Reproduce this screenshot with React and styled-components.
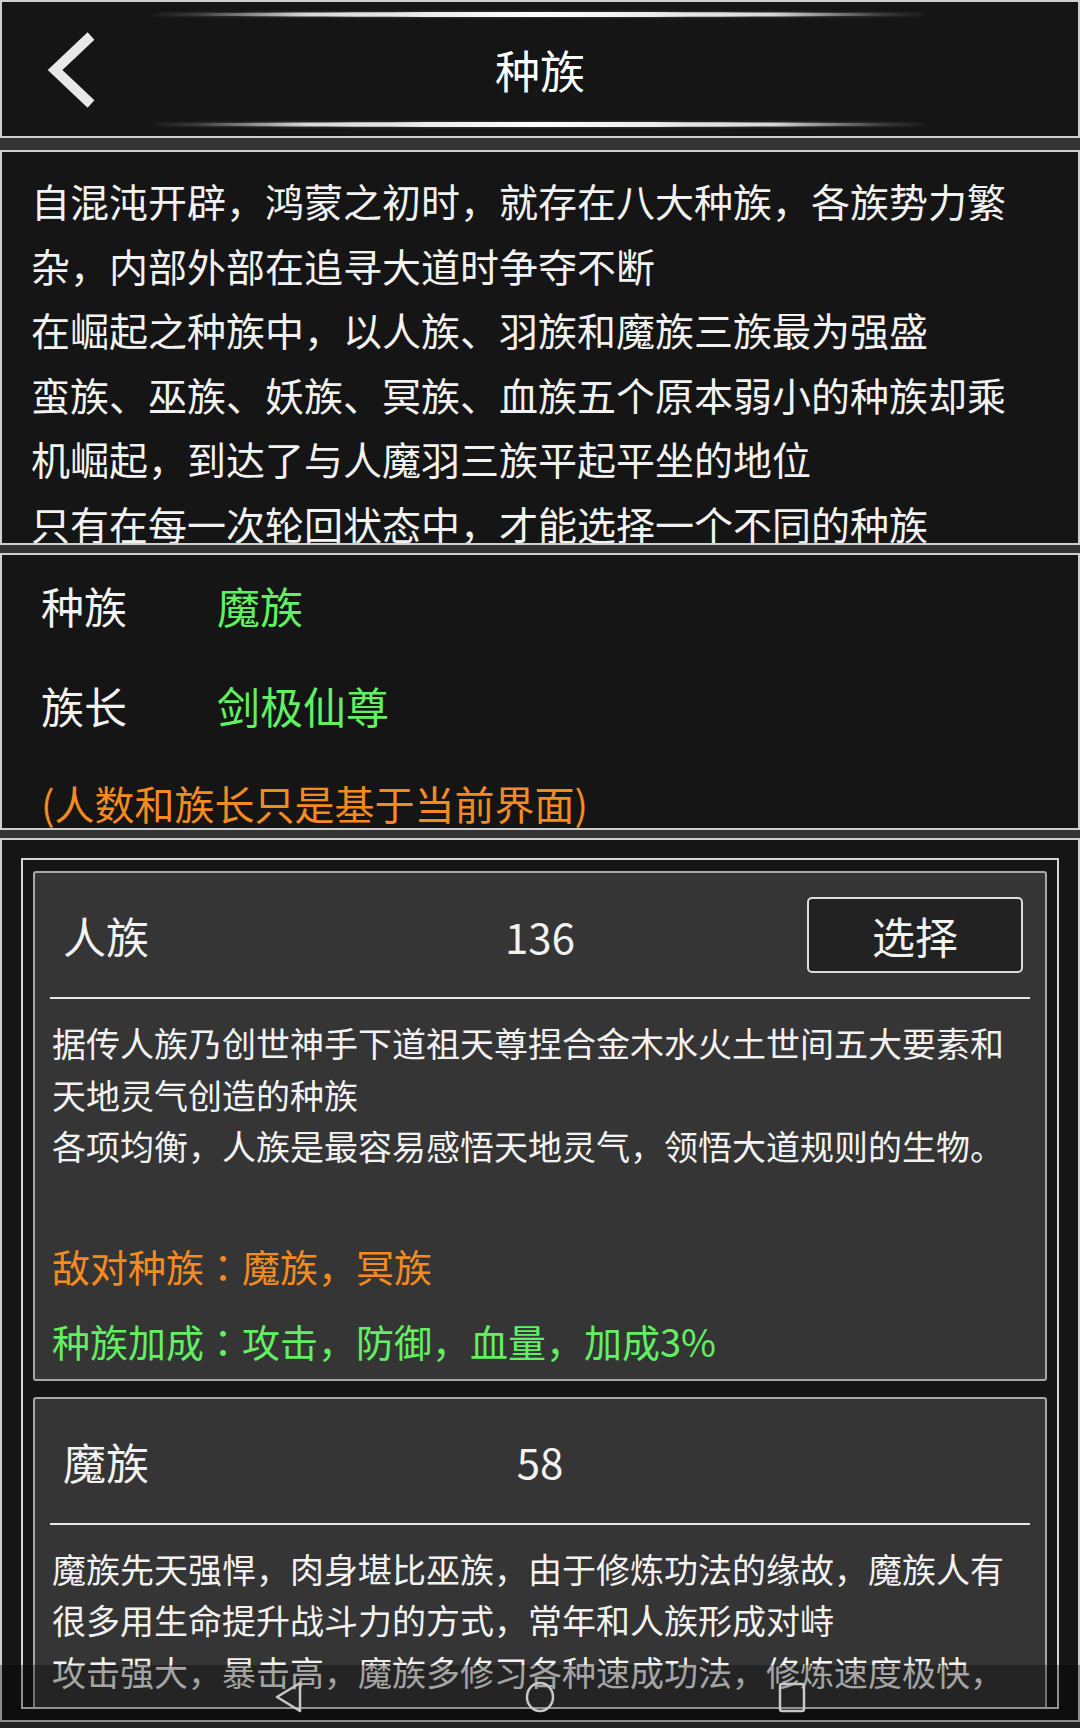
import React from 'react';
import styled, { createGlobalStyle } from 'styled-components';

const GlobalStyle = createGlobalStyle`
    html, body {
        margin: 0;
        padding: 0;
        background: #333333;
    }
`;

const Page = styled.div`
    position: relative;
    width: 1080px;
    height: 1728px;
    overflow: hidden;
    background: #333333;
    display: flex;
    flex-direction: column;
    font-family: "Noto Sans CJK SC", "Noto Sans", sans-serif;
    color: #f2f2f2;
`;

const Panel = styled.section`
    box-sizing: border-box;
    background: #151515;
    border: 2px solid #cfcfcf;
    flex-shrink: 0;
    margin-top: ${p => p.$gap || 0}px;
`;

const Header = styled(Panel)`
    height: 138px;
    display: flex;
    flex-direction: column;
    padding: 10px 0 9px;
`;

const Glow = styled.div`
    height: 5px;
    margin: 0 152px 0 150px;
    border-radius: 50%;
    background: linear-gradient(90deg, rgba(80, 80, 80, 0) 0%, #4a4a4a 7%, #d8d8d8 20%, #ffffff 50%, #d8d8d8 80%, #4a4a4a 93%, rgba(80, 80, 80, 0) 100%);
    box-shadow: 0 0 3px rgba(255, 255, 255, 0.25);
`;

const TitleRow = styled.div`
    flex: 1;
    display: grid;
    grid-template-columns: 1fr auto 1fr;
    align-items: center;
`;

const BackButton = styled.div`
    justify-self: start;
    margin-left: 44px;
    width: 50px;
    height: 78px;
    display: flex;
    svg {
        display: block;
    }
`;

const Title = styled.h1`
    margin: 0;
    font-size: 45px;
    font-weight: 400;
    line-height: 1;
    color: #ffffff;
`;

const Intro = styled(Panel)`
    height: 395px;
    overflow: hidden;
    padding: 16px 50px 0 29px;
    font-size: 39px;
    line-height: 64.5px;
`;

const Line = styled.div``;

const Info = styled(Panel)`
    padding: 0 0 0 39px;
`;

const InfoRow = styled.div`
    display: grid;
    grid-template-columns: 176px 1fr;
    align-items: center;
    height: 100px;
    font-size: 43px;
`;

const Value = styled.span`
    color: ${p => p.$color || '#f2f2f2'};
`;

const Note = styled.div`
    margin-top: 23px;
    font-size: 40px;
    line-height: 50px;
    color: #f58a1f;
`;

const ListPanel = styled(Panel)`
    flex: 1;
    flex-shrink: 1;
    min-height: 0;
    margin-bottom: 6px;
    padding: 18px 19px 11px;
    display: flex;
    flex-direction: column;
`;

const ListBox = styled.div`
    flex: 1;
    min-height: 0;
    overflow: hidden;
    border: 2px solid #d6d6d6;
    padding: 11px 10px 0;
    display: flex;
    flex-direction: column;
    gap: 16px;
`;

const Card = styled.div`
    flex-shrink: 0;
    background: #353535;
    border: 2px solid #a8a8a8;
    border-radius: 3px;
    padding-bottom: 8px;
`;

const CardHead = styled.div`
    height: 124px;
    display: grid;
    grid-template-columns: 1fr auto 1fr;
    align-items: center;
    padding: 0 22px;
`;

const RaceName = styled.span`
    margin-left: 6px;
    font-size: 43px;
`;

const Count = styled.span`
    font-size: 42px;
`;

const SelectButton = styled.button`
    justify-self: end;
    width: 216px;
    height: 76px;
    box-sizing: border-box;
    background: #222222;
    border: 2.5px solid #dddddd;
    border-radius: 5px;
    color: #f2f2f2;
    font-family: inherit;
    font-size: 43px;
    line-height: 1;
    padding: 0;
`;

const Divider = styled.div`
    height: 2px;
    margin: 0 15px;
    background: #e8e8e8;
`;

const Desc = styled.div`
    padding: 18px 17px 0;
    font-size: 34px;
    line-height: 51.5px;
`;

const Trait = styled.div`
    padding: 0 17px;
    margin-top: ${p => p.$gap}px;
    font-size: 38px;
    line-height: 60px;
    color: ${p => p.$color};
`;

/* the game's font centres the full-width colon */
const Colon = styled.span`
    font-family: "Noto Sans CJK JP", "Noto Sans CJK SC", sans-serif;
`;

const NavBar = styled.div`
    position: absolute;
    left: 0;
    right: 0;
    bottom: 0;
    height: 63px;
    background: rgba(0, 0, 0, 0.32);
    display: flex;
    justify-content: center;
    align-items: center;
    gap: 222px;
    svg {
        display: block;
    }
`;

const GREEN = '#62f062';
const ORANGE = '#f58a1f';

const races = [
    {
        name: '人族',
        count: 136,
        selectable: true,
        desc: [
            '据传人族乃创世神手下道祖天尊捏合金木水火土世间五大要素和天地灵气创造的种族',
            '各项均衡，人族是最容易感悟天地灵气，领悟大道规则的生物。',
        ],
        enemy: ['敌对种族', '魔族，冥族'],
        bonus: ['种族加成', '攻击，防御，血量，加成3%'],
    },
    {
        name: '魔族',
        count: 58,
        selectable: false,
        desc: [
            '魔族先天强悍，肉身堪比巫族，由于修炼功法的缘故，魔族人有很多用生命提升战斗力的方式，常年和人族形成对峙',
            '攻击强大，暴击高，魔族多修习各种速成功法，修炼速度极快，但是往往根基不稳',
        ],
        enemy: ['敌对种族', '人族，羽族'],
        bonus: ['种族加成', '攻击，暴击，加成3%'],
    },
];

const intro = [
    '自混沌开辟，鸿蒙之初时，就存在八大种族，各族势力繁杂，内部外部在追寻大道时争夺不断',
    '在崛起之种族中，以人族、羽族和魔族三族最为强盛',
    '蛮族、巫族、妖族、冥族、血族五个原本弱小的种族却乘机崛起，到达了与人魔羽三族平起平坐的地位',
    '只有在每一次轮回状态中，才能选择一个不同的种族',
];

const RaceCard = ({ race }) => (
    <Card>
        <CardHead>
            <RaceName>{race.name}</RaceName>
            <Count>{race.count}</Count>
            {race.selectable ? <SelectButton type="button">选择</SelectButton> : <span />}
        </CardHead>
        <Divider />
        <Desc>
            {race.desc.map(d => <Line key={d}>{d}</Line>)}
        </Desc>
        <Trait $gap={64} $color={ORANGE}>
            {race.enemy[0]}<Colon>：</Colon>{race.enemy[1]}
        </Trait>
        <Trait $gap={15} $color={GREEN}>
            {race.bonus[0]}<Colon>：</Colon>{race.bonus[1]}
        </Trait>
    </Card>
);

export default function App() {
    return (
        <Page>
            <GlobalStyle />
            <Header>
                <Glow />
                <TitleRow>
                    <BackButton>
                        <svg width="50" height="78" viewBox="0 0 50 78">
                            <polyline points="45,5 9,39 45,73" fill="none" stroke="#e8e8e8" strokeWidth="10" strokeLinejoin="miter" />
                        </svg>
                    </BackButton>
                    <Title>种族</Title>
                    <span />
                </TitleRow>
                <Glow />
            </Header>

            <Intro $gap={12}>
                {intro.map(t => <Line key={t}>{t}</Line>)}
            </Intro>

            <Info $gap={8}>
                <InfoRow>
                    <span>种族</span>
                    <Value $color={GREEN}>魔族</Value>
                </InfoRow>
                <InfoRow>
                    <span>族长</span>
                    <Value $color={GREEN}>剑极仙尊</Value>
                </InfoRow>
                <Note>(人数和族长只是基于当前界面)</Note>
            </Info>

            <ListPanel $gap={8}>
                <ListBox>
                    {races.map(r => <RaceCard key={r.name} race={r} />)}
                </ListBox>
            </ListPanel>

            <NavBar>
                <svg width="30" height="32" viewBox="0 0 30 32">
                    <polygon points="27,2 4,16 27,30" fill="none" stroke="#c8c8c8" strokeWidth="2.5" strokeLinejoin="round" />
                </svg>
                <svg width="30" height="32" viewBox="0 0 30 32">
                    <ellipse cx="15" cy="16" rx="13" ry="14" fill="none" stroke="#c8c8c8" strokeWidth="2.5" />
                </svg>
                <svg width="30" height="32" viewBox="0 0 30 32">
                    <rect x="3" y="3" width="24" height="27" rx="2" fill="none" stroke="#c8c8c8" strokeWidth="2.5" />
                </svg>
            </NavBar>
        </Page>
    );
}
